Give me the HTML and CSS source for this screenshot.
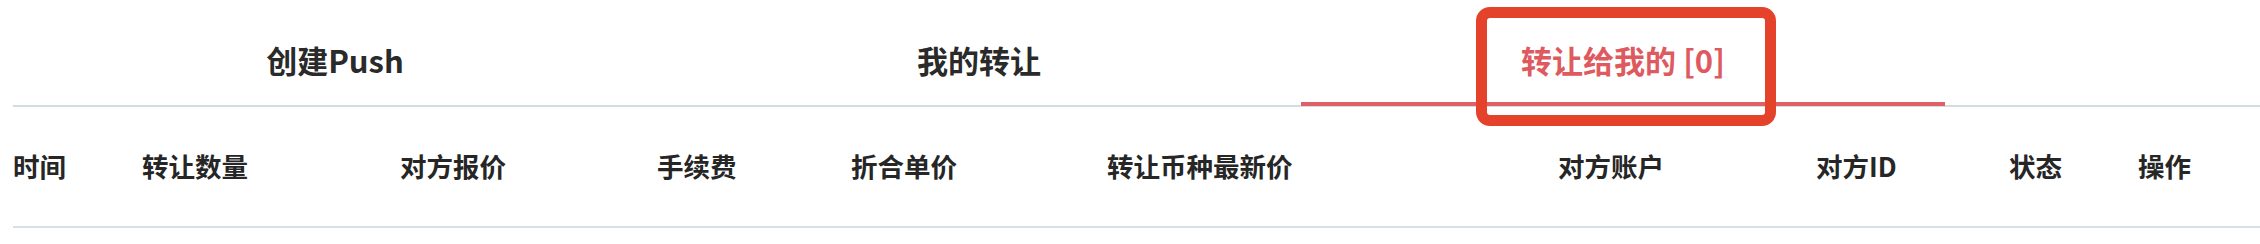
FILE: index.html
```html
<!DOCTYPE html>
<html lang="zh-CN">
<head>
<meta charset="utf-8">
<title>转让</title>
<link rel="stylesheet" href="styles.css">
</head>
<body>
<div class="page">
  <div class="tabs">
    <div class="tab">创建Push</div>
    <div class="tab">我的转让</div>
    <div class="tab active">转让给我的 [0]<span class="annot"></span></div>
  </div>
  <div class="thead">
    <div class="th">时间</div>
    <div class="th">转让数量</div>
    <div class="th">对方报价</div>
    <div class="th">手续费</div>
    <div class="th">折合单价</div>
    <div class="th">转让币种最新价</div>
    <div class="th">对方账户</div>
    <div class="th">对方ID</div>
    <div class="th">状态</div>
    <div class="th">操作</div>
  </div>
</div>
</body>
</html>
```

FILE: styles.css
```css
html, body {
  margin: 0;
  padding: 0;
  background: #ffffff;
}

body {
  font-family: "Noto Sans CJK SC", "Noto Sans", sans-serif;
  color: #262626;
}

.page {
  padding-left: 13px;
  width: 2247px;
}

.tabs {
  display: flex;
  border-bottom: 2px solid #d2dde2;
  height: 105px;
}

.tab {
  position: relative;
  width: 644px;
  box-sizing: border-box;
  padding-top: 14px;
  display: flex;
  align-items: center;
  justify-content: center;
  font-size: 31px;
  font-weight: 600;
  color: #2a2a2a;
}

.tab.active {
  color: #de5a5f;
}

.tab.active::after {
  content: "";
  position: absolute;
  left: 0;
  right: 0;
  bottom: -1px;
  height: 4px;
  background: #df6066;
}

.annot {
  position: absolute;
  left: 175px;
  top: 7px;
  width: 300px;
  height: 119px;
  box-sizing: border-box;
  border: 11px solid #e4422a;
  border-radius: 14px;
  z-index: 2;
}

.thead {
  display: grid;
  grid-template-columns: 129px 258px 257px 194px 256px 451px 258px 193px 129px 1fr;
  align-items: center;
  height: 121px;
  box-sizing: border-box;
  padding-bottom: 3px;
  border-bottom: 2px solid #d9dfe3;
}

.th {
  font-size: 26.5px;
  font-weight: 600;
  color: #262626;
  white-space: nowrap;
}
```
